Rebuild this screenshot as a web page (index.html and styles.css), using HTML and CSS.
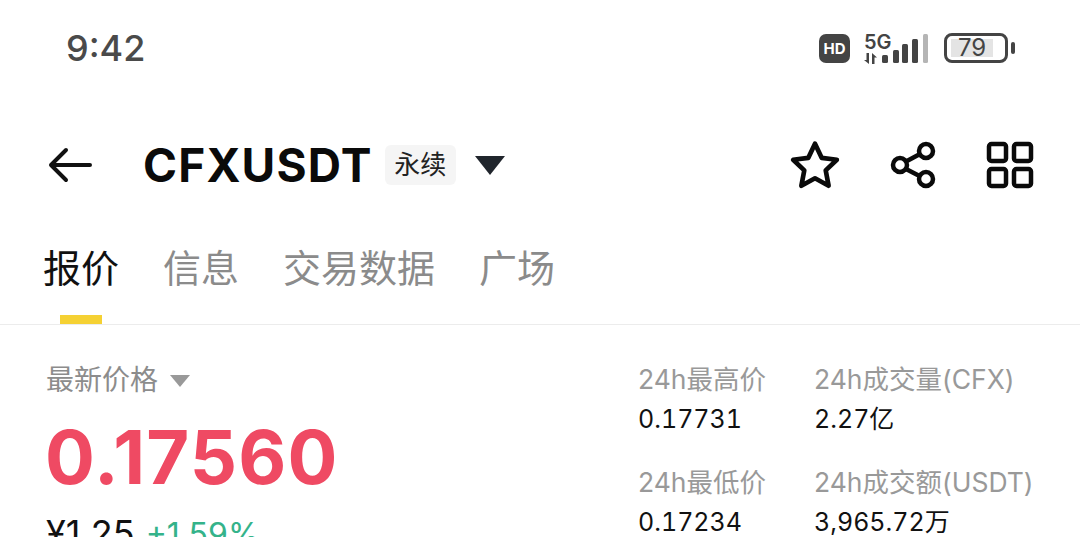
FILE: index.html
```html
<!DOCTYPE html>
<html lang="zh">
<head>
  <meta charset="UTF-8">
  <title>CFXUSDT</title>
  <link rel="stylesheet" href="styles.css">
</head>
<body>
  <!-- status bar -->
  <div class="status-bar">
    <span class="clock">9:42</span>
    <div class="status-icons">
      <span class="hd">HD</span>
      <div class="net">
        <span class="net-label">5G</span>
        <svg class="net-arrows" width="17" height="13" viewBox="0 0 17 13">
          <path d="M5 1v11L0 8h2.500V1zM8 12V1l5 4.500H10.500V12z" fill="#444"/>
        </svg>
      </div>
      <svg class="signal" width="48" height="32" viewBox="0 0 48 32">
        <rect x="1" y="22" width="6" height="8" rx="1.500" fill="#444"/>
        <rect x="12" y="17" width="6" height="13" rx="1.500" fill="#444"/>
        <rect x="21" y="11" width="6" height="19" rx="1.500" fill="#444"/>
        <rect x="31" y="6" width="6" height="24" rx="1.500" fill="#444"/>
        <rect x="42" y="1" width="5" height="29" rx="1.500" fill="#b5b5b5"/>
      </svg>
      <div class="battery">
        <div class="battery-body"><span class="battery-level">79</span></div>
        <span class="battery-tip"></span>
      </div>
    </div>
  </div>

  <!-- header -->
  <header class="top-bar">
    <svg class="back" width="44" height="36" viewBox="0 0 44 36">
      <path d="M42 18H3M18 3 3 18l15 15" fill="none" stroke="#111" stroke-width="4" stroke-linecap="round" stroke-linejoin="round"/>
    </svg>
    <h1 class="symbol">CFXUSDT</h1>
    <span class="tag">永续</span>
    <span class="caret"></span>
    <div class="actions">
      <svg class="star" width="52" height="52" viewBox="0 0 50 50">
        <path d="M25 4.500l6.400 13.600 14.600 1.900-10.700 10.200 2.800 14.800L25 37.800l-13.100 7.200 2.800-14.800L4 20l14.600-1.900z" fill="none" stroke="#0a0a0a" stroke-width="4.500" stroke-linejoin="round"/>
      </svg>
      <svg width="48" height="48" viewBox="0 0 48 48">
        <g fill="none" stroke="#0a0a0a" stroke-width="4.500">
          <circle cx="36" cy="10" r="7"/>
          <circle cx="36" cy="38" r="7"/>
          <circle cx="10" cy="24" r="7"/>
          <path d="M16 20.500 30 13M16 28l14.500 7.500"/>
        </g>
      </svg>
      <svg width="48" height="48" viewBox="0 0 48 48">
        <g fill="none" stroke="#0a0a0a" stroke-width="4.500">
          <rect x="3" y="3" width="17" height="17" rx="2.500"/>
          <rect x="28" y="3" width="17" height="17" rx="2.500"/>
          <rect x="3" y="28" width="17" height="17" rx="2.500"/>
          <rect x="28" y="28" width="17" height="17" rx="2.500"/>
        </g>
      </svg>
    </div>
  </header>

  <!-- tabs -->
  <nav class="tabs">
    <a class="tab active">报价</a>
    <a class="tab">信息</a>
    <a class="tab">交易数据</a>
    <a class="tab">广场</a>
  </nav>

  <!-- price -->
  <main class="ticker">
    <div class="price-col">
      <div class="price-label">最新价格 <span class="caret small"></span></div>
      <div class="price">0.17560</div>
      <div class="price-sub"><span class="cny">¥1.25</span><span class="change">+1.59%</span></div>
    </div>
    <div class="stats">
      <div class="stat">
        <div class="stat-label">24h最高价</div>
        <div class="stat-value">0.17731</div>
      </div>
      <div class="stat">
        <div class="stat-label">24h成交量(CFX)</div>
        <div class="stat-value">2.27亿</div>
      </div>
      <div class="stat">
        <div class="stat-label">24h最低价</div>
        <div class="stat-value">0.17234</div>
      </div>
      <div class="stat">
        <div class="stat-label">24h成交额(USDT)</div>
        <div class="stat-value">3,965.72万</div>
      </div>
    </div>
  </main>
</body>
</html>
```

FILE: styles.css
```css
* { box-sizing: border-box; }

html, body {
  height: 537px;
  overflow: hidden;
}

body {
  margin: 0;
  background: #fff;
  color: #111;
  font-family: "Inter", "Noto Sans CJK SC", sans-serif;
}

.status-bar {
  height: 96px;
  padding: 0 65px 0 66px;
  display: flex;
  align-items: center;
  justify-content: space-between;
}

.clock {
  font-size: 36px;
  font-weight: 500;
  color: #4a4a4a;
}

.status-icons {
  display: flex;
  align-items: center;
}

.hd {
  width: 31px;
  height: 29px;
  margin-right: 14px;
  background: #444;
  border-radius: 7px;
  color: #fff;
  font-size: 15px;
  font-weight: 700;
  line-height: 29px;
  text-align: center;
}

.net {
  width: 30px;
  display: flex;
  flex-direction: column;
}

.net-label {
  font-size: 20px;
  font-weight: 600;
  line-height: 20px;
  color: #444;
}

.signal {
  margin-left: -13px;
  margin-right: 15px;
  margin-top: 2px;
}

.battery {
  display: flex;
  align-items: center;
  gap: 3px;
}

.battery-body {
  width: 64px;
  height: 30px;
  padding: 3px 4px;
  border: 3px solid #444;
  border-radius: 8px;
}

.battery-level {
  display: block;
  width: 42px;
  height: 18px;
  background: #e4e4e4;
  color: #444;
  font-size: 24px;
  line-height: 18px;
  text-align: center;
}

.battery-tip {
  width: 4px;
  height: 12px;
  background: #444;
  border-radius: 2px;
}

.top-bar {
  height: 138px;
  padding: 0 46px 0 48px;
  display: flex;
  align-items: center;
}

.back { margin-right: 51px; }

.symbol {
  margin: 0 12px 0 0;
  font-size: 46px;
  font-weight: 700;
  letter-spacing: 1.2px;
  color: #0a0a0a;
}

.tag {
  width: 71px;
  height: 40px;
  margin-right: 19px;
  background: #f5f5f5;
  border-radius: 6px;
  font-size: 26px;
  line-height: 40px;
  text-align: center;
  color: #222;
}

.caret {
  width: 0;
  height: 0;
  border-left: 15px solid transparent;
  border-right: 15px solid transparent;
  border-top: 19px solid #20252c;
}

.caret.small {
  display: inline-block;
  margin-left: 4px;
  border-left-width: 10px;
  border-right-width: 10px;
  border-top: 12px solid #999;
  vertical-align: 3px;
}

.actions {
  margin-left: auto;
  display: flex;
  align-items: center;
  gap: 48px;
}

.star { margin-right: 1px; }

.tabs {
  height: 91px;
  padding: 0 43px;
  display: flex;
  gap: 44px;
  border-bottom: 1px solid #ececec;
}

.tab {
  position: relative;
  font-size: 38px;
  line-height: 68px;
  color: #8b8b8b;
}

.tab.active { color: #111; }

.tab.active::after {
  content: "";
  position: absolute;
  left: 17px;
  bottom: 0;
  width: 42px;
  height: 9px;
  background: #f5d133;
}

.ticker {
  padding: 34px 46px 0;
  display: flex;
  align-items: flex-start;
  justify-content: space-between;
}

.price-label {
  font-size: 28px;
  line-height: 42px;
  color: #8c8c8c;
}

.price {
  margin-top: 14px;
  margin-left: -1px;
  font-size: 74px;
  font-weight: 700;
  line-height: 84px;
  letter-spacing: 1.2px;
  color: #ef4a63;
}

.price-sub {
  margin-top: 12px;
  display: flex;
  align-items: baseline;
  gap: 11px;
  font-size: 36px;
  line-height: 44px;
  white-space: nowrap;
}

.change {
  font-size: 32px;
  color: #34b38a;
}

.stats {
  display: grid;
  grid-template-columns: 176px 220px;
  row-gap: 23px;
}

.stat-label {
  font-size: 26.500px;
  line-height: 40px;
  color: #999;
  white-space: nowrap;
}

.stat-value {
  font-size: 25px;
  line-height: 40px;
  color: #111;
  font-variant-numeric: tabular-nums;
  white-space: nowrap;
}
```
